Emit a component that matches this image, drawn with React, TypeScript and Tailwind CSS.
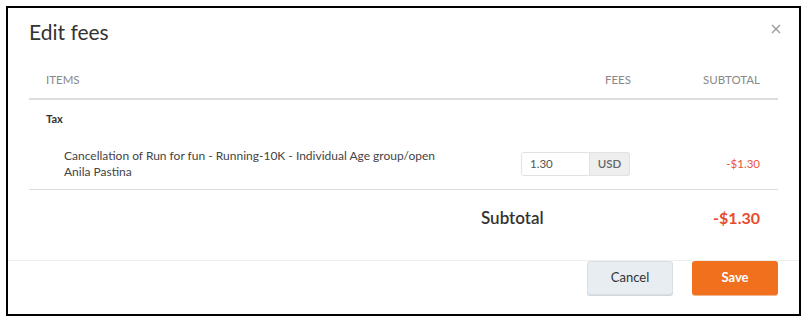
import React from "react";

export default function App() {
  return (
    <div className="w-[808px] h-[329px] bg-white pt-[6px] pl-[6px] font-['Lato',sans-serif]">
      <div className="w-[795px] h-[310px] border-2 border-black flex flex-col">
        {/* Header */}
        <div className="flex items-start justify-between pl-[21px] pr-[18px] pt-[13px]">
          <h1 className="text-[21px] leading-[22px] text-[#333]">Edit fees</h1>
          <button className="mt-[3px] text-[#999]">
            <svg width="10" height="10" viewBox="0 0 10 10" fill="none" stroke="currentColor" strokeWidth={1.4}>
              <path d="M1 1l8 8M9 1l-8 8" />
            </svg>
          </button>
        </div>

        {/* Table */}
        <div className="mx-[21px] mt-[18px] mb-[14px]">
          <div className="flex items-center h-[39px] border-b-2 border-[#ddd] pl-[17px] pr-[18px] text-[11.5px] uppercase text-[#888]">
            <div className="flex-1">Items</div>
            <div className="w-[110px] text-right">Fees</div>
            <div className="w-[129px] text-right">Subtotal</div>
          </div>

          <div className="flex items-center h-[38px] pl-[17px] text-[11px] font-bold text-[#333]">
            Tax
          </div>

          <div className="flex items-center h-[52px] border-b border-[#ddd] pl-[35px] pr-[18px]">
            <div className="flex-1 text-[12px] leading-[16px] text-[#444]">
              <div>Cancellation of Run for fun - Running-10K - Individual Age group/open</div>
              <div>Anila Pastina</div>
            </div>
            <div className="w-[110px] flex">
              <div className="w-[69px] h-[24px] border border-[#e2e2e2] rounded-l-[3px] flex items-center px-[8px] text-[11.5px] text-[#555]">
                1.30
              </div>
              <div className="w-[40px] h-[24px] border border-l-0 border-[#e2e2e2] bg-[#eeeeee] rounded-r-[3px] flex items-center justify-center text-[11.5px] font-semibold text-[#666]">
                USD
              </div>
            </div>
            <div className="w-[129px] text-right text-[11.5px] text-[#e8553d]">-$1.30</div>
          </div>

          <div className="flex items-center justify-end h-[56px] pr-[18px]">
            <div className="w-[150px] text-[17px] font-semibold text-[#333]">Subtotal</div>
            <div className="w-[129px] text-right text-[16px] font-bold text-[#e84a2c]">-$1.30</div>
          </div>
        </div>

        {/* Footer */}
        <div className="border-t border-[#eeeeee] flex justify-end gap-[19px] pr-[21px]">
          <button className="w-[86px] h-[34px] rounded-[3px] border border-[#d9e0e5] bg-[#e7edf1] shadow-[0_1px_0_#d0d8de] text-[13px] text-[#333]">
            Cancel
          </button>
          <button className="w-[86px] h-[34px] rounded-[3px] bg-[#f0701e] shadow-[0_1px_0_#f2b48c] text-[13px] font-bold text-white">
            Save
          </button>
        </div>
      </div>
    </div>
  );
}
